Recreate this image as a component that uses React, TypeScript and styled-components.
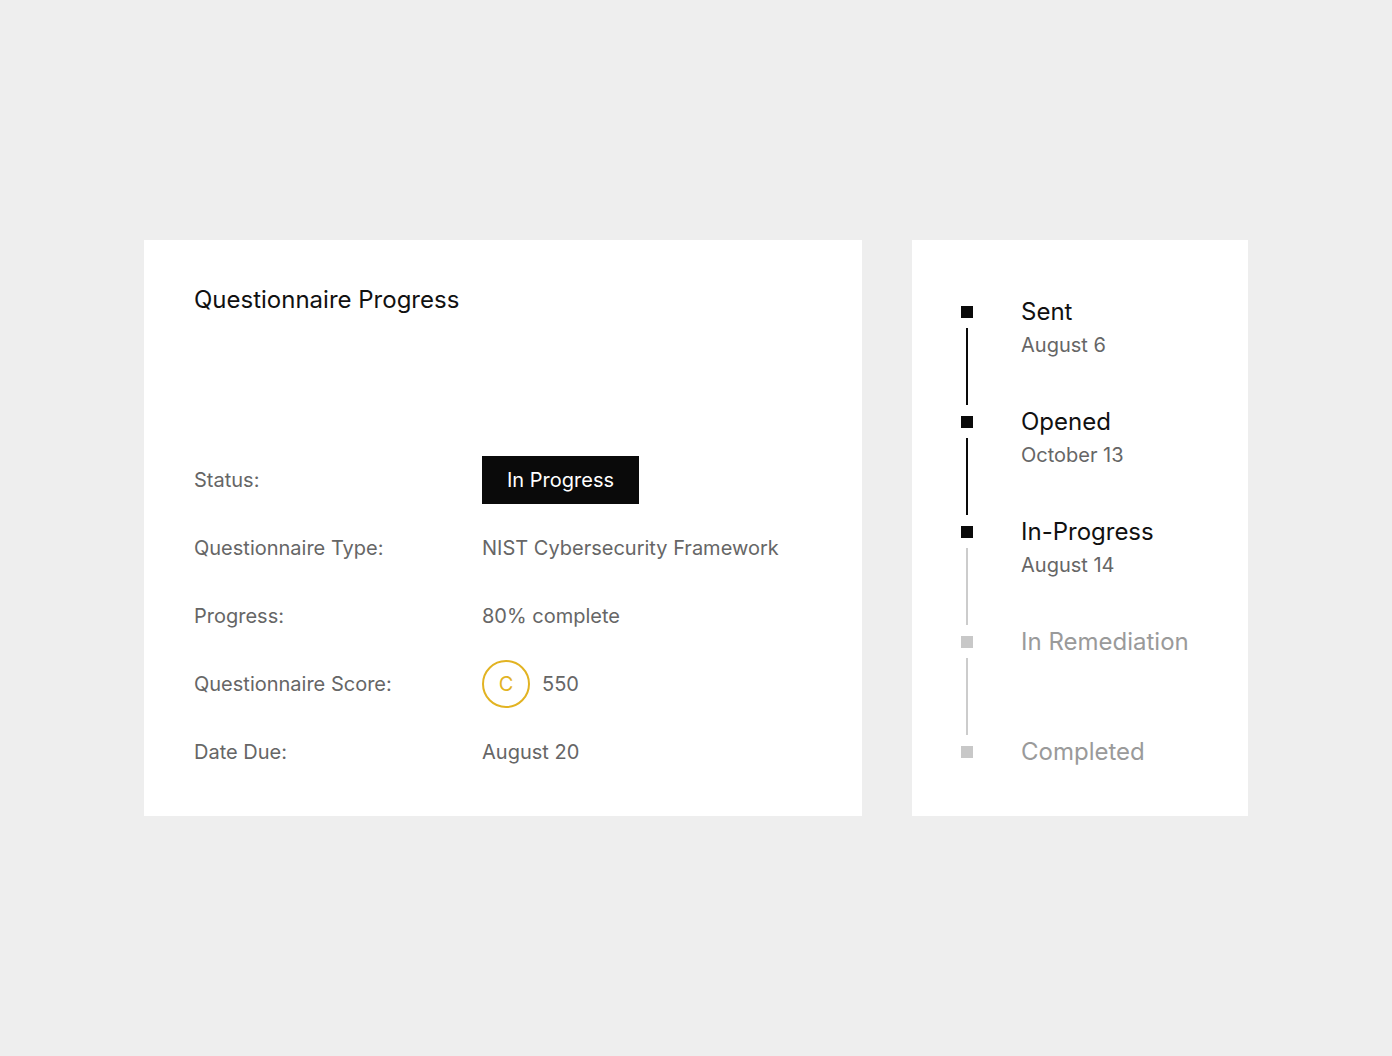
import React from 'react'
import styled, { createGlobalStyle } from 'styled-components'

const Global = createGlobalStyle`
  * { box-sizing: border-box; }
  body {
    margin: 0;
    background: #eeeeee;
    font-family: Inter, "Noto Sans", sans-serif;
  }
`

const Page = styled.div`
  min-height: 100vh;
  display: flex;
  align-items: center;
  justify-content: center;
  gap: 50px;
`

const Card = styled.section`
  background: #fff;
  height: 576px;
`

const ProgressCard = styled(Card)`
  width: 718px;
  padding: 48px 50px 0;
`

const Title = styled.h2`
  margin: 0 0 144px;
  font-size: 24px;
  line-height: 24px;
  font-weight: 400;
  color: #111;
`

const Details = styled.div`
  display: grid;
  grid-template-columns: 288px 1fr;
  grid-auto-rows: 48px;
  row-gap: 20px;
  align-items: center;
  font-size: 20px;
  color: #666;
`

const Label = styled.div``

const Value = styled.div`
  display: flex;
  align-items: center;
  gap: 12px;
`

const Badge = styled.span`
  display: inline-flex;
  align-items: center;
  height: 48px;
  padding: 0 25px;
  background: #0a0a0a;
  color: #fff;
`

const Grade = styled.span`
  width: 48px;
  height: 48px;
  border-radius: 50%;
  border: 2px solid #e2b322;
  color: #e2b322;
  display: inline-flex;
  align-items: center;
  justify-content: center;
`

const TimelineCard = styled(Card)`
  width: 336px;
  padding: 60px 0 0 49px;
`

const Step = styled.div<{ $last?: boolean }>`
  display: grid;
  grid-template-columns: 12px 1fr;
  column-gap: 48px;
  height: ${p => (p.$last ? 'auto' : '110px')};
`

const Marker = styled.div`
  display: flex;
  flex-direction: column;
  align-items: center;
`

const Square = styled.span<{ $done: boolean }>`
  width: 12px;
  height: 12px;
  margin-top: 6px;
  background: ${p => (p.$done ? '#0a0a0a' : '#c8c8c8')};
`

const Line = styled.span<{ $done: boolean }>`
  flex: 1;
  width: 2px;
  margin: 10px 0 5px;
  background: ${p => (p.$done ? '#0a0a0a' : '#cccccc')};
`

const StepName = styled.div<{ $done: boolean }>`
  font-size: 24px;
  line-height: 24px;
  color: ${p => (p.$done ? '#111' : '#9a9a9a')};
`

const StepDate = styled.div`
  margin-top: 9px;
  font-size: 20px;
  line-height: 24px;
  color: #666;
`

const steps = [
  { name: 'Sent', date: 'August 6', done: true },
  { name: 'Opened', date: 'October 13', done: true },
  { name: 'In-Progress', date: 'August 14', done: true },
  { name: 'In Remediation', done: false },
  { name: 'Completed', done: false },
]

const App: React.FC = () => (
  <>
    <Global />
    <Page>
      <ProgressCard>
        <Title>Questionnaire Progress</Title>
        <Details>
          <Label>Status:</Label>
          <Value><Badge>In Progress</Badge></Value>
          <Label>Questionnaire Type:</Label>
          <Value>NIST Cybersecurity Framework</Value>
          <Label>Progress:</Label>
          <Value>80% complete</Value>
          <Label>Questionnaire Score:</Label>
          <Value><Grade>C</Grade>550</Value>
          <Label>Date Due:</Label>
          <Value>August 20</Value>
        </Details>
      </ProgressCard>
      <TimelineCard>
        {steps.map((s, i) => {
          const last = i === steps.length - 1
          const lineDone = i < steps.length - 1 && steps[i + 1].done
          return (
            <Step key={s.name} $last={last}>
              <Marker>
                <Square $done={s.done} />
                {!last && <Line $done={lineDone} />}
              </Marker>
              <div>
                <StepName $done={s.done}>{s.name}</StepName>
                {s.date && <StepDate>{s.date}</StepDate>}
              </div>
            </Step>
          )
        })}
      </TimelineCard>
    </Page>
  </>
)

export default App
